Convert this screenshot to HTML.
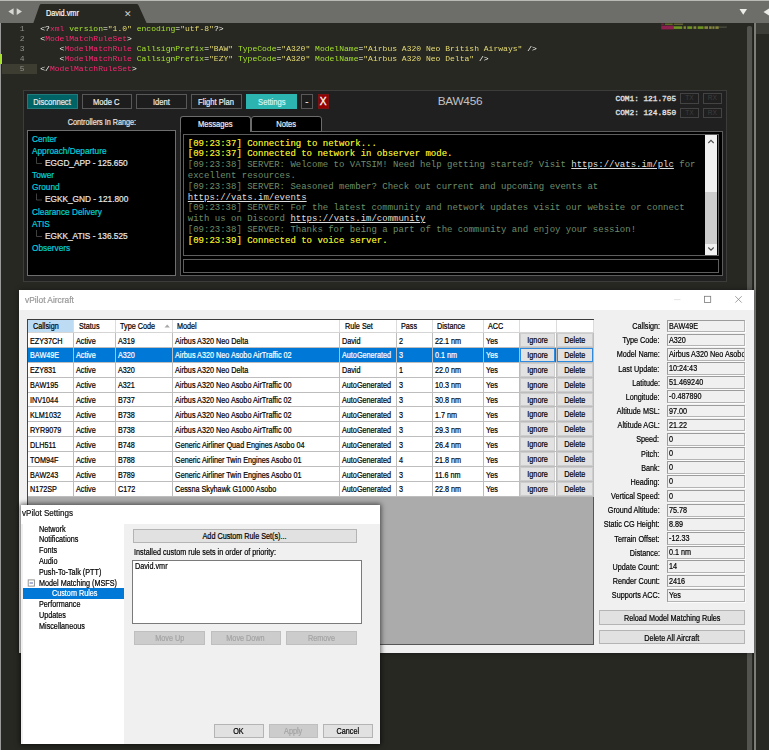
<!DOCTYPE html>
<html><head><meta charset="utf-8"><title>vPilot</title>
<style>
*{box-sizing:border-box;margin:0;padding:0}
html,body{width:769px;height:750px;overflow:hidden;background:#272822}
body{position:relative;font-family:"Liberation Sans",sans-serif;font-size:8.9px;color:#000}
.abs{position:absolute}
#all{position:absolute;left:0;top:0;width:769px;height:750px;filter:blur(0.38px)}
.nl,.nc,.nr{display:inline-block;transform:scaleX(0.815);white-space:nowrap;-webkit-text-stroke:0.22px currentColor}
.nl{transform-origin:0 50%}.nc{transform-origin:50% 50%}.nr{transform-origin:100% 50%}
/* editor */
#tabbar{left:-4px;top:-4px;width:777px;height:27px;background:#6d6e69;border-top:5px solid #b9b9b5}
#tabtxt{left:45.5px;top:8.3px;font-size:8.5px;color:#fafaf6;line-height:11px}
#tabx{left:124.1px;top:8.5px;font-size:8.6px;color:#d0d0cc;line-height:11px}
.code{font-family:"Liberation Mono",monospace;font-size:8.043px;line-height:10.1px;white-space:pre;color:#f8f8f2}
.ln{left:2px;width:22.6px;text-align:right;color:#90918b}
.p{color:#f92672}.g{color:#a6e22e}.y{color:#e6db74}
/* vpilot main */
#vp{left:22.5px;top:89.5px;width:704.7px;height:192px;background:#202020;border:1.5px solid #3c3c3a}
.vb{top:93.8px;height:15.2px;width:50.5px;border:1px solid #585858;background:#1d1d1d;color:#ececec;font-size:9.3px;line-height:14.4px;text-align:center;white-space:nowrap}
.blk{background:#000;border:1px solid #6e6e6e}
.tree{font-size:9.3px;line-height:12.15px;color:#00d0da;white-space:nowrap}
.tree .nl{transform:scaleX(.89)}
.tree .c{color:#e8e8e8;padding-left:13.5px}
.msg{font-family:"Liberation Mono",monospace;font-size:9.0px;line-height:10.76px;white-space:pre;color:#6e8e6a;font-weight:normal}
.msg .Y{color:#dada22;text-shadow:0 0 0.2px currentColor}
.msg .L{color:#dedede;text-decoration:underline}
.com{font-family:"Liberation Mono",monospace;font-size:7.77px;font-weight:normal;-webkit-text-stroke:0.3px #e4e4e4;color:#e4e4e4;white-space:pre;line-height:10px}
.txrx{width:18.5px;height:10.8px;border:1px solid #434343;color:#3e3e3e;font-size:6.6px;line-height:8.8px;text-align:center;background:#1f1f1f}
.tab{top:116.1px;border:1px solid #6c6c6c;border-radius:3px 3px 0 0;background:#000;color:#f0f0f0;font-size:9.3px;line-height:14px;text-align:center;white-space:nowrap}
/* aircraft */
#ac{left:18.7px;top:290px;width:735.6px;height:363.3px;background:#f0f0f0;box-shadow:0 0 5px 0 rgba(0,0,0,.38)}
#actb{left:18.7px;top:290px;width:735.6px;height:19.5px;background:#fff}
#grid{left:27.2px;top:318.6px;width:566.4px;height:326.4px;background:#ababab;border:1px solid #565656;border-top:1.3px solid #3c3c3c;border-left-color:#444}
table.g{position:absolute;left:28.2px;top:319.5px;border-collapse:collapse;table-layout:fixed;width:564.4px;color:#000}
table.g td,table.g th{height:14.87px;padding:0 0 0 2.1px;border-right:1px solid #bdbdbd;border-bottom:1px solid #bdbdbd;background:#fff;white-space:nowrap;overflow:hidden;text-align:left;font-weight:normal;line-height:13px}
table.g th{height:12.9px;padding-left:4.4px;border-color:#dcdcdc;border-bottom-color:#d5d5d5;line-height:11.9px;padding-top:0.6px}
table.g tr.s td{background:#0078d7;color:#fff}
table.g th>span{position:relative;top:1.3px}
table.g td>span{position:relative;top:1.1px}
table.g td.b{padding:0 0.2px 0 0.2px}
table.g td.b div{height:13.9px;border:1px solid #cdcdcd;background:#e2e2e2;text-align:center;line-height:12.2px;color:#000}
table.g tr.s td.b div{border-color:#2f8ade}
.lab{left:540px;width:119.6px;text-align:right;line-height:12px;white-space:nowrap}
.val{left:667.2px;width:77.4px;height:12.8px;border:1px solid #9c9c9c;border-right-color:#b4b4b4;border-bottom-color:#b4b4b4;background:#f0f0f0;line-height:11.6px;padding-left:0.8px;white-space:nowrap;overflow:hidden;box-shadow:1px 1px 0 #fbfbfb}
.wb{border:1px solid #b4b4b4;background:#e1e1e1;text-align:center;white-space:nowrap}
.wb.d{background:#cccccc;border-color:#bfbfbf;color:#a3a3a3}
/* settings */
#st{left:20.8px;top:504.9px;width:359.2px;height:239.5px;background:#f0f0f0;box-shadow:0 0 5px 1px rgba(0,0,0,.6)}
#sttb{left:20.8px;top:504.9px;width:359.2px;height:18.8px;background:#fff}
#sttree{left:23px;top:521.2px;width:101.4px;height:223px;background:#fff}
.ti{left:39px;line-height:10.78px;white-space:nowrap;font-size:8.9px}
</style></head><body><div id="all">
<!-- editor chrome -->
<div class="abs" id="tabbar"></div>
<svg class="abs" style="left:0;top:0" width="769" height="24" viewBox="0 0 769 24">
  <path d="M33.2 23.5 L39.6 5.2 Q40 4 41.4 4 L136.6 4 Q138 4 138.5 5.2 L146.8 23.5 Z" fill="#272822"/>
  <path d="M13.6 8.2 L13.6 15 L8.3 11.6 Z M16.7 8.2 L16.7 15 L22 11.6 Z" fill="#d6d6d2"/>
  <path d="M739.5 9 L747 9 L743.25 14.8 Z" fill="#ecece8"/>
  <path d="M769 8.6 L769 15.4 L763.5 12 Z" fill="#ecece8"/>
</svg>
<div class="abs" id="tabtxt"><span class="nl" style="transform:scaleX(.86)">David.vmr</span></div>
<div class="abs" id="tabx">✕</div>
<div class="abs" style="left:2px;top:64px;width:34.5px;height:10.2px;background:#3e3d32"></div>
<div class="abs code ln" style="top:24.1px">1
2
3
4
5</div>
<div class="abs code" style="left:40.3px;top:24.1px">&lt;?<span class="p">xml</span><span class="g"> version</span>=<span class="y">"1.0"</span><span class="g"> encoding</span>=<span class="y">"utf-8"</span>?&gt;
&lt;<span class="p">ModelMatchRuleSet</span>&gt;
    &lt;<span class="p">ModelMatchRule</span><span class="g"> CallsignPrefix</span>=<span class="y">"BAW"</span><span class="g"> TypeCode</span>=<span class="y">"A320"</span><span class="g"> ModelName</span>=<span class="y">"Airbus A320 Neo British Airways"</span> /&gt;
    &lt;<span class="p">ModelMatchRule</span><span class="g"> CallsignPrefix</span>=<span class="y">"EZY"</span><span class="g"> TypeCode</span>=<span class="y">"A320"</span><span class="g"> ModelName</span>=<span class="y">"Airbus A320 Neo Delta"</span> /&gt;
&lt;/<span class="p">ModelMatchRuleSet</span>&gt;</div>
<!-- minimap -->
<svg class="abs" style="left:655px;top:18px" width="80" height="20" viewBox="0 0 80 20"><rect x="6.2" y="5.6" width="2.6" height="1.2" fill="#a32058" opacity="0.8"/><rect x="9.9" y="5.6" width="7.8" height="1.2" fill="#6e8a24" opacity="0.9"/><rect x="18.7" y="5.6" width="9.4" height="1.2" fill="#7d7a3a" opacity="0.8"/><rect x="6.2" y="7.6" width="12.5" height="3.8" fill="#9a1f52" opacity="0.9"/><rect x="18.7" y="8.3" width="8.5" height="2.6" fill="#6e9422" opacity="1"/><rect x="28.6" y="8.3" width="2.3" height="2.6" fill="#86863c" opacity="1"/><rect x="32.3" y="8.3" width="4.9" height="2.6" fill="#6e9422" opacity="1"/><rect x="38.5" y="8.3" width="2.8" height="2.6" fill="#86863c" opacity="1"/><rect x="42.7" y="8.3" width="5.8" height="2.6" fill="#6e9422" opacity="1"/><rect x="49.4" y="8.3" width="3.6" height="2.6" fill="#86863c" opacity="1"/><rect x="54.1" y="8.3" width="2.6" height="2.6" fill="#86863c" opacity="1"/><rect x="57.4" y="8.3" width="2.1" height="2.6" fill="#86863c" opacity="1"/><rect x="60.4" y="8.3" width="3.3" height="2.6" fill="#86863c" opacity="1"/><rect x="63.7" y="8.6" width="8.1" height="1.0" fill="#7a7a60" opacity="0.6"/></svg>
<!-- scrollbar + divider + right pane -->
<div class="abs" style="left:747.2px;top:26px;width:4.6px;height:730px;background:#53544f;border-radius:2px"></div>
<div class="abs" style="left:752.6px;top:23px;width:1.6px;height:735px;background:#1f201c"></div>
<div class="abs" style="left:754.2px;top:23px;width:1.4px;height:735px;background:#7d7e79"></div>
<div class="abs" style="left:755.6px;top:23px;width:18px;height:10.5px;background:#3d3e37"></div>
<!-- left strip -->
<div class="abs" style="left:-4px;top:23px;width:5.3px;height:735px;background:#9a9a98"></div>
<div class="abs" style="left:-4px;top:53.5px;width:6.3px;height:10.5px;background:#a6e22e"></div>
<!-- vPilot main window -->
<div class="abs" id="vp"></div>
<div class="abs vb" style="left:27px;background:#006466;border-color:#237a7a"><span class="nc">Disconnect</span></div>
<div class="abs vb" style="left:81.5px;"><span class="nc">Mode C</span></div>
<div class="abs vb" style="left:136.3px;"><span class="nc">Ident</span></div>
<div class="abs vb" style="left:191.2px;"><span class="nc">Flight Plan</span></div>
<div class="abs vb" style="left:246.2px;background:#2cb5b0;border-color:#2cb5b0;color:#d8f4f2"><span class="nc">Settings</span></div>
<div class="abs vb" style="left:301px;width:11.5px;font-size:11px;line-height:12.5px">-</div>
<div class="abs vb" style="left:317.5px;width:11.5px;background:#960000;border-color:#7a1414;font-weight:normal;-webkit-text-stroke:0.35px #fff;font-size:10.2px;line-height:13.8px">X</div>
<div class="abs" style="left:27px;top:116.1px;width:149px;text-align:center;color:#e6e6e6;font-size:8.9px;line-height:12px"><span class="nc">Controllers In Range:</span></div>
<div class="abs blk" style="left:27px;top:130.3px;width:149px;height:145.3px"></div>
<div class="abs tree" style="left:31.5px;top:132.6px"><div><span class="nl">Center</span></div><div><span class="nl">Approach/Departure</span></div><div class=c><span class="nl">EGGD_APP - 125.650</span></div><div><span class="nl">Tower</span></div><div><span class="nl">Ground</span></div><div class=c><span class="nl">EGKK_GND - 121.800</span></div><div><span class="nl">Clearance Delivery</span></div><div><span class="nl">ATIS</span></div><div class=c><span class="nl">EGKK_ATIS - 136.525</span></div><div><span class="nl">Observers</span></div></div>
<svg class="abs" style="left:30px;top:150px" width="20" height="100" viewBox="0 0 20 100"><g stroke="#5c5c5c" stroke-width="0.7" fill="none"><path d="M6.5 7 V13.5 H12"/><path d="M6.5 43.5 V50 H12"/><path d="M6.5 80 V86.5 H12"/></g></svg>
<div class="abs" style="left:180.3px;top:131px;width:542.5px;height:145px;border:1px solid #5c5c5c;background:#000"></div>
<div class="abs tab" style="left:180.3px;width:70.7px;height:16px;border-bottom:none"><span class="nc">Messages</span></div>
<div class="abs tab" style="left:250.7px;width:71px;height:15.5px"><span class="nc">Notes</span></div>
<div class="abs" style="left:183px;top:133.8px;width:535.5px;height:122.3px;border:1px solid #5e5e5e;background:#000"></div>
<div class="abs msg" style="left:187.8px;top:138.7px"><span class="Y">[09:23:37] Connecting to network...</span>
<span class="Y">[09:23:37] Connected to network in observer mode.</span>
[09:23:38] SERVER: Welcome to VATSIM! Need help getting started? Visit <span class="L">https://vats.im/plc</span> for
excellent resources.
[09:23:38] SERVER: Seasoned member? Check out current and upcoming events at
<span class="L">https://vats.im/events</span>
[09:23:38] SERVER: For the latest community and network updates visit our website or connect
with us on Discord <span class="L">https://vats.im/community</span>
[09:23:38] SERVER: Thanks for being a part of the community and enjoy your session!
<span class="Y">[09:23:39] Connected to voice server.</span></div>
<div class="abs" style="left:705.3px;top:135px;width:11.8px;height:120.2px;background:#f0f0f0"></div>
<div class="abs" style="left:705.3px;top:192px;width:11.8px;height:52px;background:#cdcdcd"></div>
<svg class="abs" style="left:705.3px;top:135px" width="12" height="121" viewBox="0 0 12 121"><g stroke="#505050" stroke-width="1.1" fill="none"><path d="M3.3 8 L6 5.3 L8.7 8"/><path d="M3.3 112.5 L6 115.2 L8.7 112.5"/></g></svg>
<div class="abs" style="left:183px;top:258.6px;width:535.5px;height:14.2px;border:1px solid #5e5e5e;background:#000"></div>
<div class="abs" style="left:400px;top:94.2px;width:120px;text-align:center;color:#c2c2c2;font-size:11.8px;line-height:15px;letter-spacing:-0.25px">BAW456</div>
<div class="abs com" style="left:615.5px;top:94px">COM1: 121.705</div>
<div class="abs com" style="left:615.5px;top:108px">COM2: 124.850</div>
<div class="abs txrx" style="left:680.3px;top:93.2px">TX</div><div class="abs txrx" style="left:703.1px;top:93.2px">RX</div>
<div class="abs txrx" style="left:680.3px;top:107.7px">TX</div><div class="abs txrx" style="left:703.1px;top:107.7px">RX</div>
<!-- vPilot Aircraft window -->
<div class="abs" id="ac"></div><div class="abs" id="actb"></div>
<div class="abs" style="left:24.6px;top:293.6px;font-size:9.3px;color:#989898;line-height:12px"><span class="nl" style="transform:scaleX(.9)">vPilot Aircraft</span></div>
<svg class="abs" style="left:668px;top:292px" width="80" height="16" viewBox="0 0 80 16"><path d="M6 7.6 H12.5" stroke="#e2e2e2" stroke-width="0.9"/><rect x="36.5" y="4.3" width="6.2" height="6.2" fill="none" stroke="#7a7a7a" stroke-width="0.8"/><path d="M67.3 4.2 L73.7 10.6 M73.7 4.2 L67.3 10.6" stroke="#8a8a8a" stroke-width="0.8"/></svg>
<div class="abs" id="grid"></div>
<table class="g"><colgroup><col style="width:45.7px"><col style="width:41.7px"><col style="width:56.9px"><col style="width:167.4px"><col style="width:56.4px"><col style="width:36.3px"><col style="width:50.7px"><col style="width:35.9px"><col style="width:37px"><col style="width:37.2px"></colgroup>
<tr><th style=background:#bddcf4><span class="nl">Callsign</span></th><th><span class="nl">Status</span></th><th><span class="nl">Type Code</span></th><th><span class="nl">Model</span></th><th><span class="nl">Rule Set</span></th><th><span class="nl">Pass</span></th><th><span class="nl">Distance</span></th><th><span class="nl">ACC</span></th><th></th><th></th></tr>
<tr><td><span class="nl">EZY37CH</span></td><td><span class="nl">Active</span></td><td><span class="nl">A319</span></td><td><span class="nl">Airbus A320 Neo Delta</span></td><td><span class="nl">David</span></td><td><span class="nl">2</span></td><td><span class="nl">22.1 nm</span></td><td><span class="nl">Yes</span></td><td class="b"><div><span class="nc">Ignore</span></div></td><td class="b"><div><span class="nc">Delete</span></div></td></tr>
<tr class="s"><td><span class="nl">BAW49E</span></td><td><span class="nl">Active</span></td><td><span class="nl">A320</span></td><td><span class="nl">Airbus A320 Neo Asobo AirTraffic 02</span></td><td><span class="nl">AutoGenerated</span></td><td><span class="nl">3</span></td><td><span class="nl">0.1 nm</span></td><td><span class="nl">Yes</span></td><td class="b"><div><span class="nc">Ignore</span></div></td><td class="b"><div><span class="nc">Delete</span></div></td></tr>
<tr><td><span class="nl">EZY831</span></td><td><span class="nl">Active</span></td><td><span class="nl">A320</span></td><td><span class="nl">Airbus A320 Neo Delta</span></td><td><span class="nl">David</span></td><td><span class="nl">1</span></td><td><span class="nl">22.0 nm</span></td><td><span class="nl">Yes</span></td><td class="b"><div><span class="nc">Ignore</span></div></td><td class="b"><div><span class="nc">Delete</span></div></td></tr>
<tr><td><span class="nl">BAW195</span></td><td><span class="nl">Active</span></td><td><span class="nl">A321</span></td><td><span class="nl">Airbus A320 Neo Asobo AirTraffic 00</span></td><td><span class="nl">AutoGenerated</span></td><td><span class="nl">3</span></td><td><span class="nl">10.3 nm</span></td><td><span class="nl">Yes</span></td><td class="b"><div><span class="nc">Ignore</span></div></td><td class="b"><div><span class="nc">Delete</span></div></td></tr>
<tr><td><span class="nl">INV1044</span></td><td><span class="nl">Active</span></td><td><span class="nl">B737</span></td><td><span class="nl">Airbus A320 Neo Asobo AirTraffic 02</span></td><td><span class="nl">AutoGenerated</span></td><td><span class="nl">3</span></td><td><span class="nl">30.8 nm</span></td><td><span class="nl">Yes</span></td><td class="b"><div><span class="nc">Ignore</span></div></td><td class="b"><div><span class="nc">Delete</span></div></td></tr>
<tr><td><span class="nl">KLM1032</span></td><td><span class="nl">Active</span></td><td><span class="nl">B738</span></td><td><span class="nl">Airbus A320 Neo Asobo AirTraffic 02</span></td><td><span class="nl">AutoGenerated</span></td><td><span class="nl">3</span></td><td><span class="nl">1.7 nm</span></td><td><span class="nl">Yes</span></td><td class="b"><div><span class="nc">Ignore</span></div></td><td class="b"><div><span class="nc">Delete</span></div></td></tr>
<tr><td><span class="nl">RYR9079</span></td><td><span class="nl">Active</span></td><td><span class="nl">B738</span></td><td><span class="nl">Airbus A320 Neo Asobo AirTraffic 00</span></td><td><span class="nl">AutoGenerated</span></td><td><span class="nl">3</span></td><td><span class="nl">29.3 nm</span></td><td><span class="nl">Yes</span></td><td class="b"><div><span class="nc">Ignore</span></div></td><td class="b"><div><span class="nc">Delete</span></div></td></tr>
<tr><td><span class="nl">DLH511</span></td><td><span class="nl">Active</span></td><td><span class="nl">B748</span></td><td><span class="nl">Generic Airliner Quad Engines Asobo 04</span></td><td><span class="nl">AutoGenerated</span></td><td><span class="nl">3</span></td><td><span class="nl">26.4 nm</span></td><td><span class="nl">Yes</span></td><td class="b"><div><span class="nc">Ignore</span></div></td><td class="b"><div><span class="nc">Delete</span></div></td></tr>
<tr><td><span class="nl">TOM94F</span></td><td><span class="nl">Active</span></td><td><span class="nl">B788</span></td><td><span class="nl">Generic Airliner Twin Engines Asobo 01</span></td><td><span class="nl">AutoGenerated</span></td><td><span class="nl">4</span></td><td><span class="nl">21.8 nm</span></td><td><span class="nl">Yes</span></td><td class="b"><div><span class="nc">Ignore</span></div></td><td class="b"><div><span class="nc">Delete</span></div></td></tr>
<tr><td><span class="nl">BAW243</span></td><td><span class="nl">Active</span></td><td><span class="nl">B789</span></td><td><span class="nl">Generic Airliner Twin Engines Asobo 01</span></td><td><span class="nl">AutoGenerated</span></td><td><span class="nl">3</span></td><td><span class="nl">11.6 nm</span></td><td><span class="nl">Yes</span></td><td class="b"><div><span class="nc">Ignore</span></div></td><td class="b"><div><span class="nc">Delete</span></div></td></tr>
<tr><td><span class="nl">N172SP</span></td><td><span class="nl">Active</span></td><td><span class="nl">C172</span></td><td><span class="nl">Cessna Skyhawk G1000 Asobo</span></td><td><span class="nl">AutoGenerated</span></td><td><span class="nl">3</span></td><td><span class="nl">22.8 nm</span></td><td><span class="nl">Yes</span></td><td class="b"><div><span class="nc">Ignore</span></div></td><td class="b"><div><span class="nc">Delete</span></div></td></tr>
</table>
<svg class="abs" style="left:163.2px;top:322.3px" width="10" height="8" viewBox="0 0 10 8"><path d="M1.5 5.5 L4.2 2.6 L6.9 5.5 Z" fill="#a8a8a8"/></svg>
<div class="abs lab" style="top:320.00px"><span class="nr">Callsign:</span></div><div class="abs val" style="top:319.50px"><span class="nl">BAW49E</span></div>
<div class="abs lab" style="top:334.17px"><span class="nr">Type Code:</span></div><div class="abs val" style="top:333.67px"><span class="nl">A320</span></div>
<div class="abs lab" style="top:348.34px"><span class="nr">Model Name:</span></div><div class="abs val" style="top:347.84px"><span class="nl">Airbus A320 Neo Asobo AirTraffic 02</span></div>
<div class="abs lab" style="top:362.51px"><span class="nr">Last Update:</span></div><div class="abs val" style="top:362.01px"><span class="nl">10:24:43</span></div>
<div class="abs lab" style="top:376.68px"><span class="nr">Latitude:</span></div><div class="abs val" style="top:376.18px"><span class="nl">51.469240</span></div>
<div class="abs lab" style="top:390.85px"><span class="nr">Longitude:</span></div><div class="abs val" style="top:390.35px"><span class="nl">-0.487890</span></div>
<div class="abs lab" style="top:405.02px"><span class="nr">Altitude MSL:</span></div><div class="abs val" style="top:404.52px"><span class="nl">97.00</span></div>
<div class="abs lab" style="top:419.19px"><span class="nr">Altitude AGL:</span></div><div class="abs val" style="top:418.69px"><span class="nl">21.22</span></div>
<div class="abs lab" style="top:433.36px"><span class="nr">Speed:</span></div><div class="abs val" style="top:432.86px"><span class="nl">0</span></div>
<div class="abs lab" style="top:447.53px"><span class="nr">Pitch:</span></div><div class="abs val" style="top:447.03px"><span class="nl">0</span></div>
<div class="abs lab" style="top:461.70px"><span class="nr">Bank:</span></div><div class="abs val" style="top:461.20px"><span class="nl">0</span></div>
<div class="abs lab" style="top:475.87px"><span class="nr">Heading:</span></div><div class="abs val" style="top:475.37px"><span class="nl">0</span></div>
<div class="abs lab" style="top:490.04px"><span class="nr">Vertical Speed:</span></div><div class="abs val" style="top:489.54px"><span class="nl">0</span></div>
<div class="abs lab" style="top:504.21px"><span class="nr">Ground Altitude:</span></div><div class="abs val" style="top:503.71px"><span class="nl">75.78</span></div>
<div class="abs lab" style="top:518.38px"><span class="nr">Static CG Height:</span></div><div class="abs val" style="top:517.88px"><span class="nl">8.89</span></div>
<div class="abs lab" style="top:532.55px"><span class="nr">Terrain Offset:</span></div><div class="abs val" style="top:532.05px"><span class="nl">-12.33</span></div>
<div class="abs lab" style="top:546.72px"><span class="nr">Distance:</span></div><div class="abs val" style="top:546.22px"><span class="nl">0.1 nm</span></div>
<div class="abs lab" style="top:560.89px"><span class="nr">Update Count:</span></div><div class="abs val" style="top:560.39px"><span class="nl">14</span></div>
<div class="abs lab" style="top:575.06px"><span class="nr">Render Count:</span></div><div class="abs val" style="top:574.56px"><span class="nl">2416</span></div>
<div class="abs lab" style="top:589.23px"><span class="nr">Supports ACC:</span></div><div class="abs val" style="top:588.73px"><span class="nl">Yes</span></div>
<div class="abs wb" style="left:599px;top:610.4px;width:145.6px;height:14.4px;line-height:14.4px"><span class="nc">Reload Model Matching Rules</span></div>
<div class="abs wb" style="left:599px;top:629.9px;width:145.6px;height:14.5px;line-height:14px"><span class="nc">Delete All Aircraft</span></div>
<!-- vPilot Settings window -->
<div class="abs" id="st"></div><div class="abs" id="sttb"></div><div class="abs" id="sttree"></div>
<div class="abs" style="left:22.2px;top:507.1px;font-size:9.3px;color:#111;line-height:12px"><span class="nl" style="transform:scaleX(.865)">vPilot Settings</span></div>
<div class="abs" style="left:23px;top:588.1px;width:101.4px;height:10.7px;background:#0078d7"></div>
<div class="abs ti" style="top:523.60px;"><span class="nl">Network</span></div>
<div class="abs ti" style="top:534.38px;"><span class="nl">Notifications</span></div>
<div class="abs ti" style="top:545.16px;"><span class="nl">Fonts</span></div>
<div class="abs ti" style="top:555.94px;"><span class="nl">Audio</span></div>
<div class="abs ti" style="top:566.72px;"><span class="nl">Push-To-Talk (PTT)</span></div>
<div class="abs ti" style="top:577.50px;"><span class="nl">Model Matching (MSFS)</span></div>
<div class="abs ti" style="top:588.28px;left:52px;color:#fff"><span class="nl">Custom Rules</span></div>
<div class="abs ti" style="top:599.06px;"><span class="nl">Performance</span></div>
<div class="abs ti" style="top:609.84px;"><span class="nl">Updates</span></div>
<div class="abs ti" style="top:620.62px;"><span class="nl">Miscellaneous</span></div>
<svg class="abs" style="left:27px;top:579px" width="9" height="9" viewBox="0 0 9 9"><rect x="1.2" y="0.9" width="6.2" height="6.2" fill="#fff" stroke="#8a8a8a" stroke-width="0.9"/><path d="M2.6 4 H6" stroke="#3a5a9a" stroke-width="0.9"/></svg>
<div class="abs wb" style="left:133.2px;top:528.8px;width:223.6px;height:14px;line-height:12.6px"><span class="nc">Add Custom Rule Set(s)...</span></div>
<div class="abs" style="left:134.4px;top:546px;line-height:12px;white-space:nowrap"><span class="nl">Installed custom rule sets in order of priority:</span></div>
<div class="abs" style="left:132.2px;top:559.8px;width:229.6px;height:63.8px;background:#fff;border:1px solid #7a7a7a"></div>
<div class="abs" style="left:135px;top:559.6px;line-height:12px;white-space:nowrap"><span class="nl">David.vmr</span></div>
<div class="abs wb d" style="left:134.2px;top:631.2px;width:70.4px;height:13.6px;line-height:13.4px"><span class="nc">Move Up</span></div>
<div class="abs wb d" style="left:210.7px;top:631.2px;width:70.4px;height:13.6px;line-height:13.4px"><span class="nc">Move Down</span></div>
<div class="abs wb d" style="left:286.4px;top:631.2px;width:70.4px;height:13.6px;line-height:13.4px"><span class="nc">Remove</span></div>
<div class="abs wb" style="left:214px;top:723.7px;width:49.6px;height:14.6px;line-height:12.8px"><span class="nc">OK</span></div>
<div class="abs wb d" style="left:268.6px;top:723.7px;width:49.6px;height:14.6px;line-height:12.8px"><span class="nc">Apply</span></div>
<div class="abs wb" style="left:323.2px;top:723.7px;width:49.6px;height:14.6px;line-height:12.8px"><span class="nc">Cancel</span></div>
</div></body></html>
